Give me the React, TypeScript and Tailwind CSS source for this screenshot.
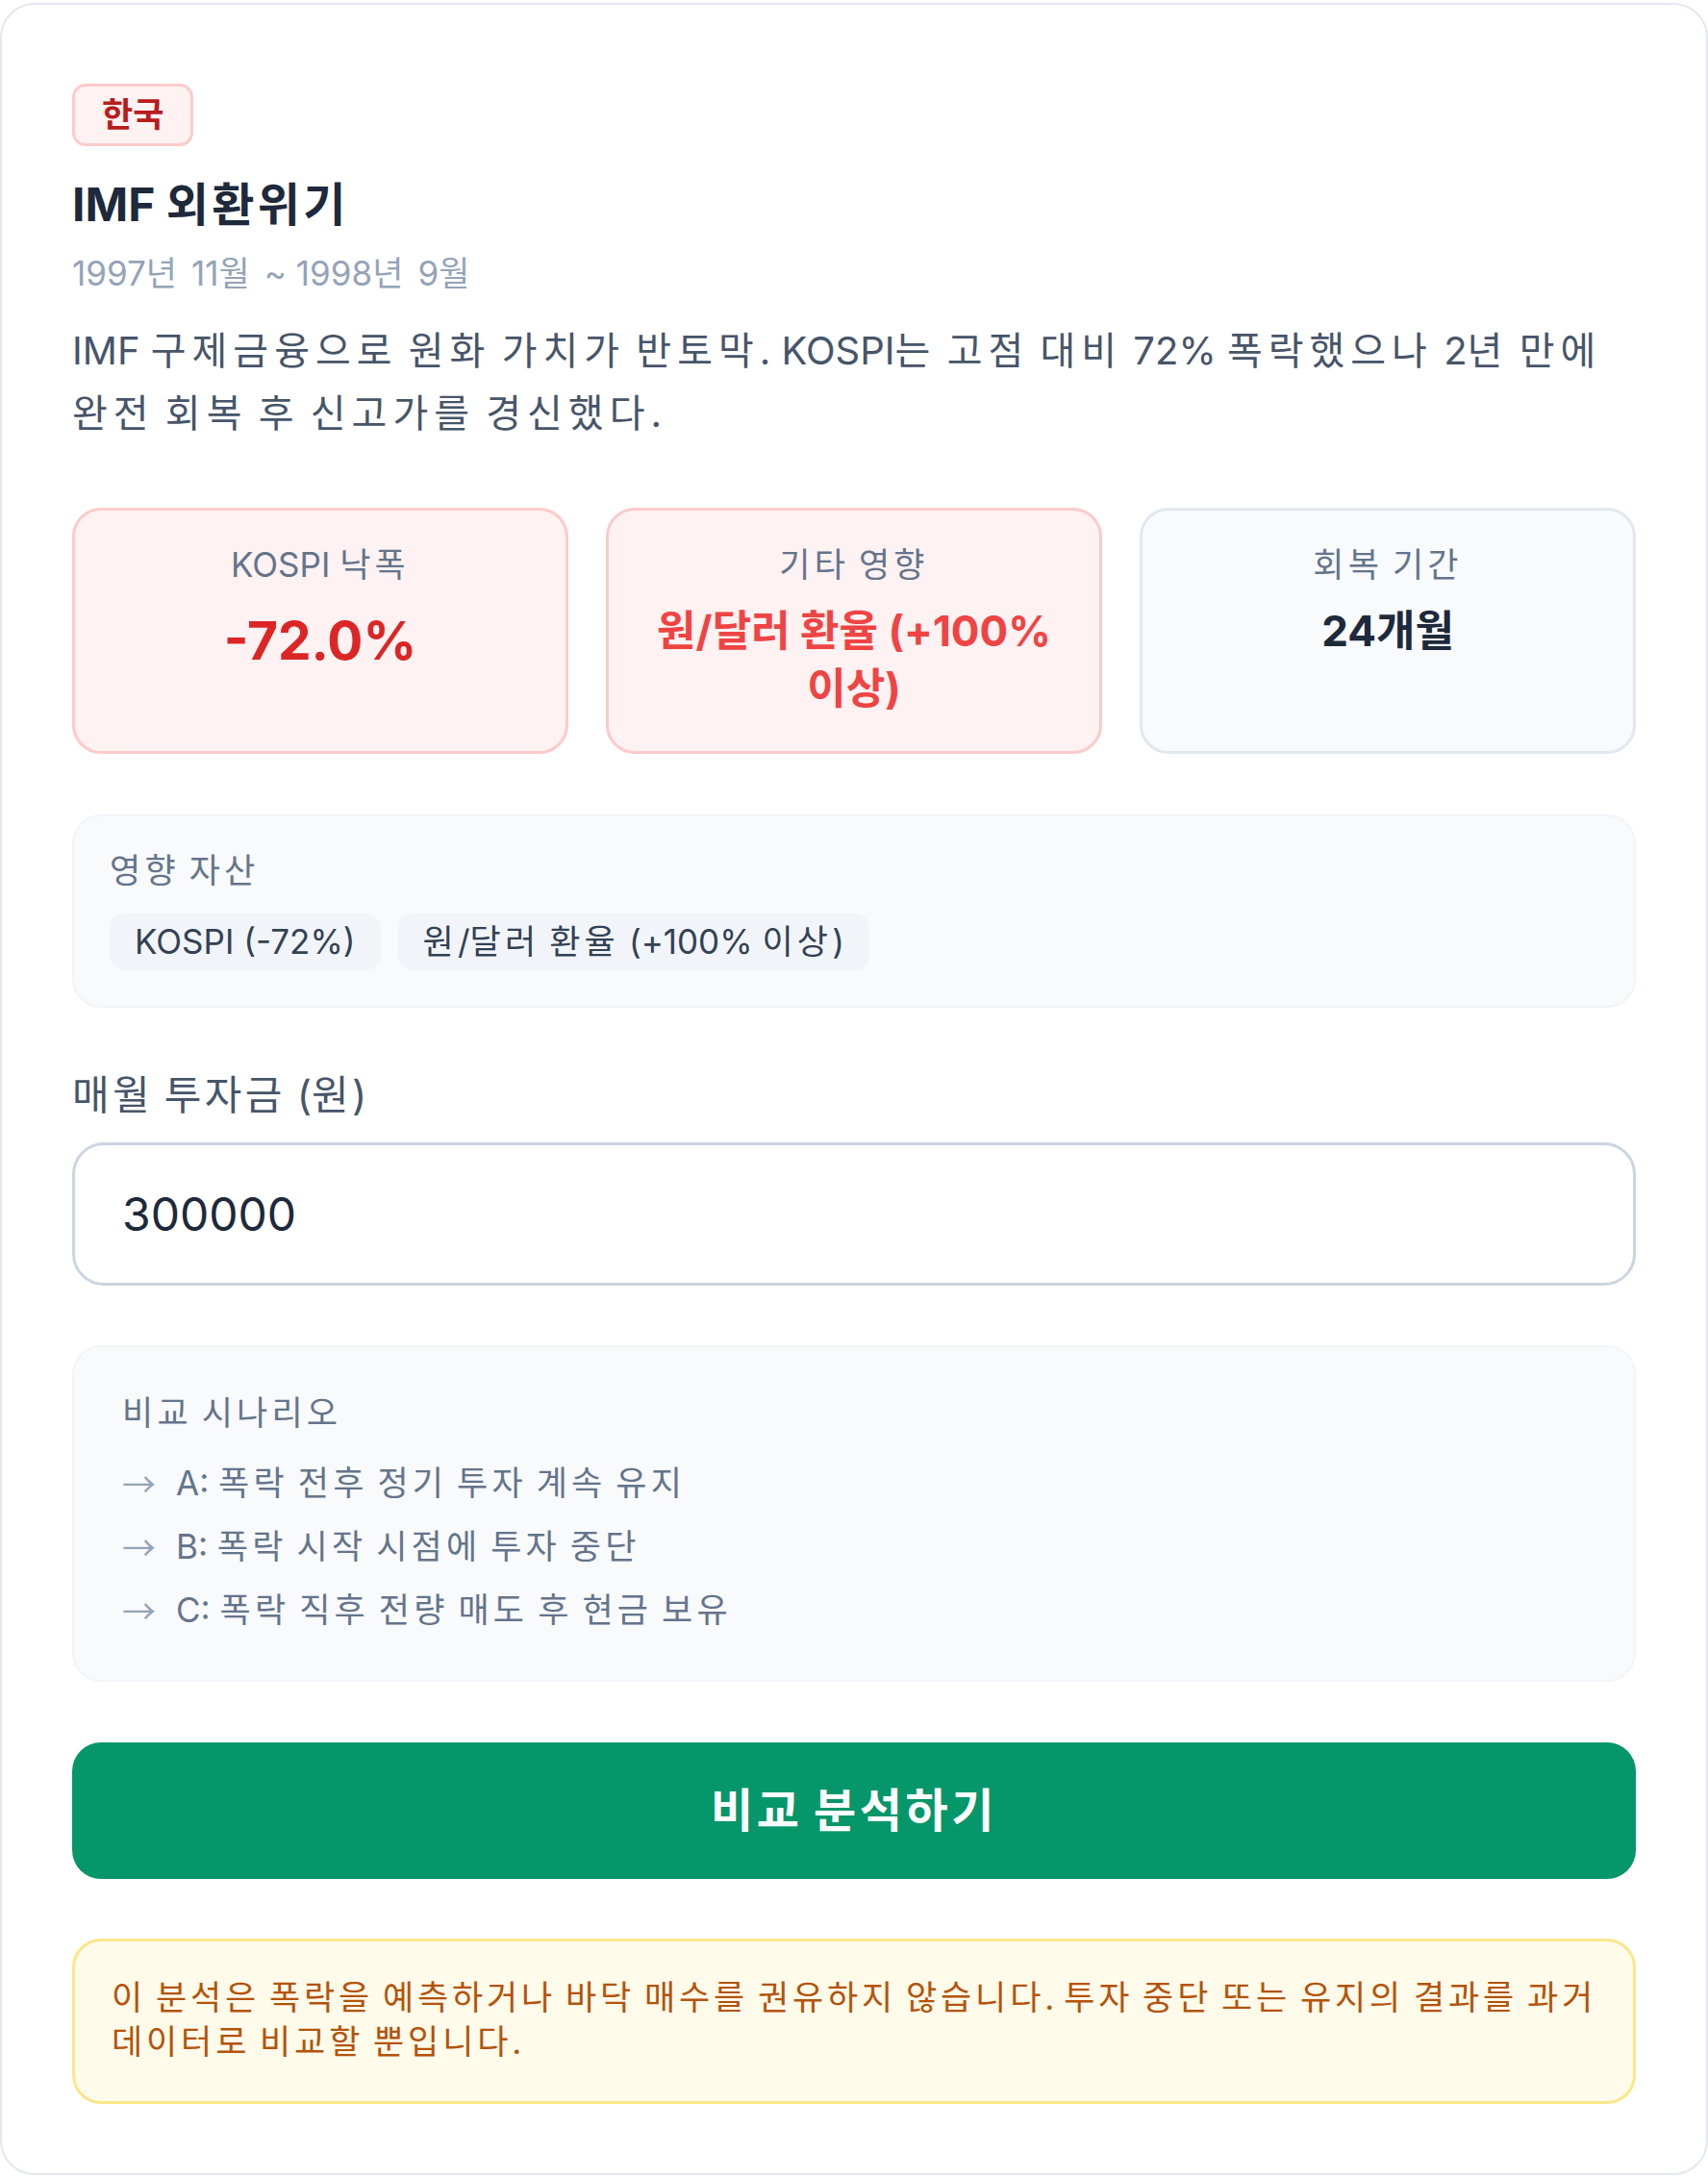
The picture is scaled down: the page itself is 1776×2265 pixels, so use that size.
import { useState } from 'react'

// Hangul runs get a little extra tracking so the lines keep the reference's width
const HANGUL = /([\uAC00-\uD7A3]+)/

function Ko({ text, track }: { text: string; track: string }) {
    return (
        <>
            {text.split(HANGUL).map((part, i) =>
                i % 2 === 1 ? (
                    <span key={i} className={track}>
                        {part}
                    </span>
                ) : (
                    part
                ),
            )}
        </>
    )
}

type Stat = {
    label: string
    value: string
    box: string
    valueClass: string
}

const STATS: Stat[] = [
    {
        label: 'KOSPI 낙폭',
        value: '-72.0%',
        box: 'border-[#fecaca] bg-[#fef2f2]',
        valueClass: 'text-[55px] leading-[80px] text-[#dc2626]',
    },
    {
        label: '기타 영향',
        value: '원/달러 환율 (+100% 이상)',
        box: 'border-[#fecaca] bg-[#fef2f2]',
        valueClass: 'text-[44px] leading-[60px] text-[#ef4444]',
    },
    {
        label: '회복 기간',
        value: '24개월',
        box: 'border-[#e2e8f0] bg-[#f8fafc]',
        valueClass: 'text-[44px] leading-[60px] text-[#1e293b]',
    },
]

const ASSETS = ['KOSPI (-72%)', '원/달러 환율 (+100% 이상)']

const SCENARIOS = [
    'A: 폭락 전후 정기 투자 계속 유지',
    'B: 폭락 시작 시점에 투자 중단',
    'C: 폭락 직후 전량 매도 후 현금 보유',
]

export default function App() {
    const [amount, setAmount] = useState('300000')

    return (
        <div className="min-h-screen bg-white pt-[3px] [font-family:Inter,'Noto_Sans_CJK_KR',sans-serif]">
            <div className="rounded-[36px] border-2 border-[#e2e8f0] bg-white px-[73px] pt-[82px] pb-[72px]">
                <div className="flex">
                    <span className="rounded-[14px] border-[3px] border-[#fecaca] bg-[#fef2f2] px-[28px] py-[5px] text-[35px] leading-[49px] font-bold text-[#b91c1c]">
                        한국
                    </span>
                </div>
                <h2 className="mt-[31px] text-[48px] leading-[60px] font-bold text-[#1e293b]">
                    <Ko text="IMF 외환위기" track="tracking-[0.07em]" />
                </h2>
                <p className="mt-[18px] text-[35px] leading-[46px] text-[#94a3b8]">
                    <Ko text="1997년 11월 ~ 1998년 9월" track="tracking-[0.15em]" />
                </p>
                <p className="mt-[25px] text-[40px] leading-[65px] text-[#475569]">
                    <Ko
                        text="IMF 구제금융으로 원화 가치가 반토막. KOSPI는 고점 대비 72% 폭락했으나 2년 만에"
                        track="tracking-[0.15em]"
                    />
                    <br />
                    <Ko text="완전 회복 후 신고가를 경신했다." track="tracking-[0.15em]" />
                </p>

                <div className="mt-[66px] grid grid-cols-3 gap-[39px]">
                    {STATS.map((stat) => (
                        <div
                            key={stat.label}
                            className={`rounded-[30px] border-[3px] px-[36px] pt-[33px] pb-[35px] text-center ${stat.box}`}
                        >
                            <div className="text-[35px] leading-[46px] text-[#64748b]">
                                <Ko text={stat.label} track="tracking-[0.12em]" />
                            </div>
                            <div className={`mt-[16px] font-bold ${stat.valueClass}`}>{stat.value}</div>
                        </div>
                    ))}
                </div>

                <div className="mt-[63px] rounded-[30px] border-2 border-[#f1f5f9] bg-[#f8fafc] px-[37px] pt-[33px] pb-[37px]">
                    <div className="text-[35px] leading-[46px] text-[#64748b]">
                        <Ko text="영향 자산" track="tracking-[0.12em]" />
                    </div>
                    <div className="mt-[22px] flex flex-wrap gap-[18px]">
                        {ASSETS.map((asset) => (
                            <span
                                key={asset}
                                className="rounded-[15px] bg-[#f1f5f9] px-[26px] py-[6px] text-[35px] leading-[47px] text-[#334155]"
                            >
                                <Ko text={asset} track="tracking-[0.12em]" />
                            </span>
                        ))}
                    </div>
                </div>

                <label className="mt-[61px] block text-[42px] leading-[60px] text-[#475569]" htmlFor="amount">
                    <Ko text="매월 투자금 (원)" track="tracking-[0.08em]" />
                </label>
                <input
                    id="amount"
                    type="text"
                    inputMode="numeric"
                    value={amount}
                    onChange={(e) => setAmount(e.target.value)}
                    className="mt-[19px] block h-[149px] w-full rounded-[33px] border-[3px] border-[#cbd5e1] bg-white px-[49px] text-[48px] text-[#1e293b] outline-none"
                />

                <div className="mt-[62px] rounded-[30px] border-2 border-[#f1f5f9] bg-[#f8fafc] px-[50px] pt-[45px] pb-[50px]">
                    <div className="text-[35px] leading-[46px] text-[#64748b]">
                        <Ko text="비교 시나리오" track="tracking-[0.12em]" />
                    </div>
                    <ul className="mt-[27px] flex flex-col gap-[20px]">
                        {SCENARIOS.map((s) => (
                            <li key={s} className="flex text-[35px] leading-[46px] text-[#64748b]">
                                <span className="w-[56px] shrink-0 text-[#94a3b8] [font-family:'Noto_Sans_CJK_KR',sans-serif]">
                                    →
                                </span>
                                <span>
                                    <Ko text={s} track="tracking-[0.12em]" />
                                </span>
                            </li>
                        ))}
                    </ul>
                </div>

                <button className="mt-[63px] block h-[142px] w-full rounded-[30px] bg-[#059669] text-[48px] font-bold text-white">
                    <Ko text="비교 분석하기" track="tracking-[0.075em]" />
                </button>

                <div className="mt-[62px] rounded-[30px] border-[3px] border-[#fde68a] bg-[#fffbeb] pt-[35px] pr-[10px] pb-[39px] pl-[38px] text-[35px] leading-[46px] text-[#b45309]">
                    <Ko
                        text="이 분석은 폭락을 예측하거나 바닥 매수를 권유하지 않습니다. 투자 중단 또는 유지의 결과를 과거"
                        track="tracking-[0.11em]"
                    />
                    <br />
                    <Ko text="데이터로 비교할 뿐입니다." track="tracking-[0.11em]" />
                </div>
            </div>
        </div>
    )
}
